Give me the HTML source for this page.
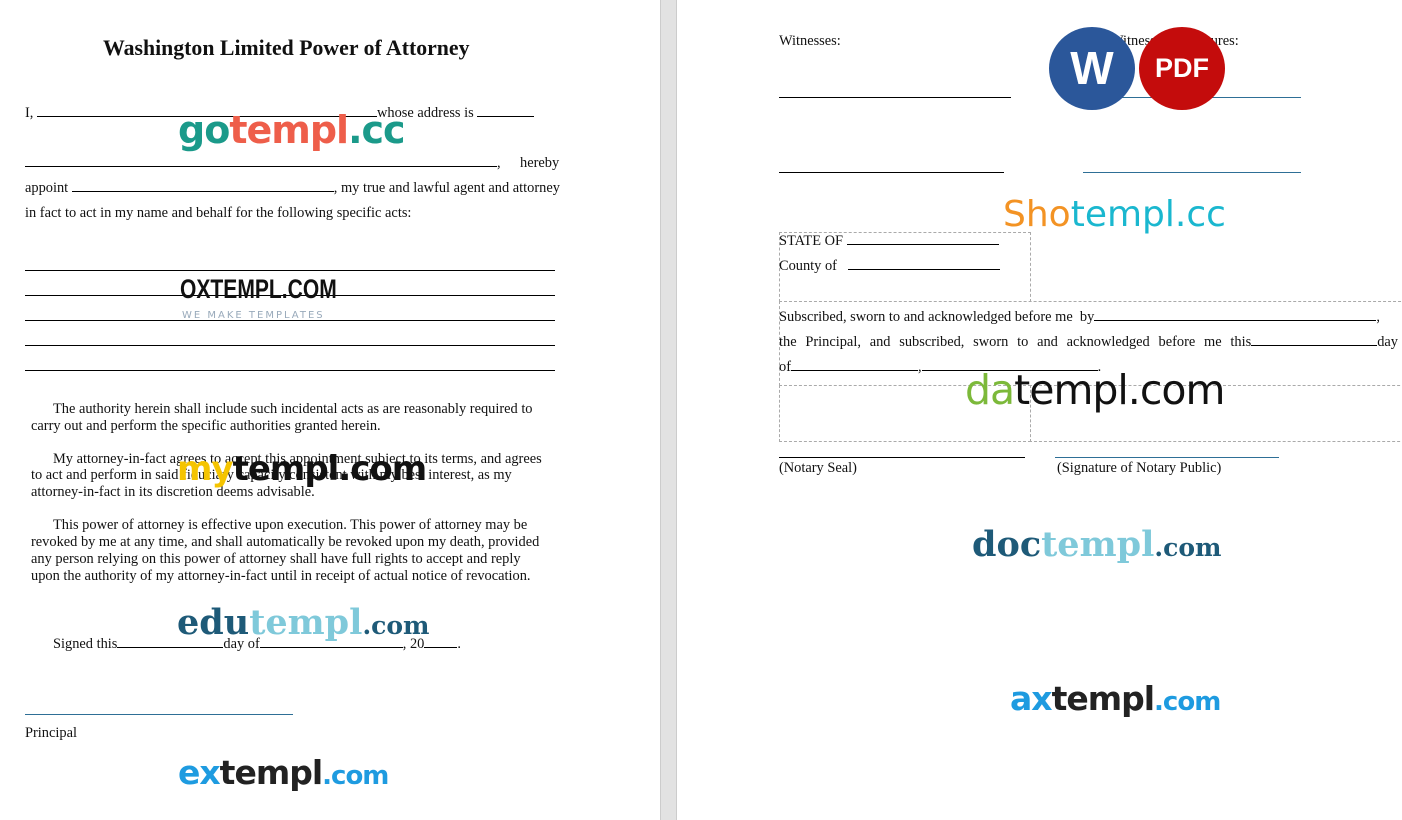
<!DOCTYPE html>
<html><head><meta charset="utf-8"><style>
body{margin:0;width:1402px;height:820px;background:#fff;position:relative;overflow:hidden;font-family:"Liberation Serif",serif;font-size:14.4px;color:#111}
.a{position:absolute;white-space:nowrap;line-height:16px}
.u{display:inline-block;border-bottom:1px solid #000;height:11px;vertical-align:baseline}
.h{position:absolute;height:0;border-top:1px solid #000}
.b{position:absolute;height:0;border-top:1px solid #2e6f96}
.wm{position:absolute;white-space:nowrap;font-family:"DejaVu Sans","Liberation Sans",sans-serif;font-weight:bold;line-height:1}
.d{position:absolute;border:1px dashed #aaa}
</style></head><body>
<div style="position:absolute;left:660px;top:0;width:17px;height:820px;background:#e2e2e2;border-left:1px solid #ccc;border-right:1px solid #ccc;box-sizing:border-box"></div>

<div class="a" style="left:103px;top:37px;font-size:21.8px;font-weight:bold;line-height:22px">Washington Limited Power of Attorney</div>
<div class="a" style="left:25px;top:105px">I, <span class="u" style="width:340px"></span>whose address is <span class="u" style="width:57px"></span></div>
<div class="a" style="left:25px;top:155px"><span class="u" style="width:472px"></span>,</div>
<div class="a" style="left:520px;top:155px">hereby</div>
<div class="a" style="left:25px;top:180px">appoint <span class="u" style="width:262px"></span>, my true and lawful agent and attorney</div>
<div class="a" style="left:25px;top:205px">in fact to act in my name and behalf for the following specific acts:</div>
<div class="h" style="left:25px;top:270px;width:530px"></div>
<div class="h" style="left:25px;top:295px;width:530px"></div>
<div class="h" style="left:25px;top:320px;width:530px"></div>
<div class="h" style="left:25px;top:345px;width:530px"></div>
<div class="h" style="left:25px;top:370px;width:530px"></div>

<div class="a" style="left:53px;top:401px">The authority herein shall include such incidental acts as are reasonably required to</div>
<div class="a" style="left:31px;top:418px">carry out and perform the specific authorities granted herein.</div>
<div class="a" style="left:53px;top:451px">My attorney-in-fact agrees to accept this appointment subject to its terms, and agrees</div>
<div class="a" style="left:31px;top:467px">to act and perform in said fiduciary capacity consistent with my best interest, as my</div>
<div class="a" style="left:31px;top:484px">attorney-in-fact in its discretion deems advisable.</div>
<div class="a" style="left:53px;top:517px">This power of attorney is effective upon execution. This power of attorney may be</div>
<div class="a" style="left:31px;top:534px">revoked by me at any time, and shall automatically be revoked upon my death, provided</div>
<div class="a" style="left:31px;top:551px">any person relying on this power of attorney shall have full rights to accept and reply</div>
<div class="a" style="left:31px;top:568px">upon the authority of my attorney-in-fact until in receipt of actual notice of revocation.</div>
<div class="a" style="left:53px;top:636px">Signed this<span class="u" style="width:106px"></span>day of<span class="u" style="width:143px"></span>, 20<span class="u" style="width:33px"></span>.</div>
<div class="b" style="left:25px;top:714px;width:268px"></div>
<div class="a" style="left:25px;top:725px">Principal</div>

<!-- right page -->
<div class="a" style="left:779px;top:33px">Witnesses:</div>
<div class="a" style="left:1110px;top:33px">Witnesses' Signatures:</div>
<div class="h" style="left:779px;top:97px;width:232px"></div>
<div class="b" style="left:1083px;top:97px;width:218px"></div>
<div class="h" style="left:779px;top:172px;width:225px"></div>
<div class="b" style="left:1083px;top:172px;width:218px"></div>

<div class="d" style="left:779px;top:232px;width:250px;height:69px;border-bottom:none"></div>
<div class="d" style="left:779px;top:301px;width:640px;height:84px;border-bottom:none"></div>
<div class="d" style="left:779px;top:385px;width:250px;height:55px"></div>
<div class="d" style="left:1029px;top:385px;width:390px;height:55px;border-left:none"></div>
<div class="a" style="left:779px;top:233px">STATE OF <span class="u" style="width:152px"></span></div>
<div class="a" style="left:779px;top:258px">County of &nbsp;&nbsp;<span class="u" style="width:152px"></span></div>
<div class="a" style="left:779px;top:309px">Subscribed, sworn to and acknowledged before me &nbsp;by<span class="u" style="width:282px"></span>,</div>
<div class="a" style="left:779px;top:334px;width:619px;white-space:normal;text-align:justify;text-align-last:justify">the Principal, and subscribed, sworn to and acknowledged before me this<span class="u" style="width:126px"></span>day</div>
<div class="a" style="left:779px;top:359px">of<span class="u" style="width:127px"></span>,<span class="u" style="width:176px"></span>.</div>
<div class="h" style="left:779px;top:457px;width:246px"></div>
<div class="b" style="left:1055px;top:457px;width:224px"></div>
<div class="a" style="left:779px;top:460px">(Notary Seal)</div>
<div class="a" style="left:1057px;top:460px">(Signature of Notary Public)</div>

<!-- badges -->
<div style="position:absolute;left:1049px;top:27px;width:86px;height:83px;border-radius:50%;background:#2b579a;color:#fff;font:bold 46px 'Liberation Sans',sans-serif;text-align:center;line-height:83px">W</div>
<div style="position:absolute;left:1139px;top:27px;width:86px;height:83px;border-radius:50%;background:#c40c0c;color:#fff;font:bold 27px 'Liberation Sans',sans-serif;text-align:center;line-height:83px">PDF</div>

<!-- watermarks -->
<div class="wm" style="left:178px;top:111px;font-size:38px;letter-spacing:-1px;font-weight:bold"><span style="color:#1b9a8a">go</span><span style="color:#ee5e4a">templ</span><span style="color:#1b9a8a">.cc</span></div>
<div class="wm" style="left:180px;top:276px;font-size:27px;color:#111;font-family:'Liberation Sans',sans-serif;transform:scaleX(0.78);transform-origin:left top">OXTEMPL.COM</div>
<div class="wm" style="left:182px;top:311px;font-size:10px;color:#9ab;font-weight:normal;letter-spacing:2px">WE MAKE TEMPLATES</div>
<div class="wm" style="left:177px;top:452px;font-size:34px;letter-spacing:-1px"><span style="color:#f5c400">my</span><span style="color:#111">templ.com</span></div>
<div class="wm" style="left:177px;top:605px;font-size:35px;font-family:'DejaVu Serif',serif"><span style="color:#1e5a78">edu</span><span style="color:#7fc9da">templ</span><span style="color:#1e5a78;font-size:25px">.com</span></div>
<div class="wm" style="left:178px;top:756px;font-size:33px;letter-spacing:-1px"><span style="color:#1e9be0">ex</span><span style="color:#222">templ</span><span style="color:#1e9be0;font-size:26px">.com</span></div>
<div class="wm" style="left:1003px;top:197px;font-size:36px;font-weight:normal"><span style="color:#f39324">Sho</span><span style="color:#1ab7cf">templ.cc</span></div>
<div class="wm" style="left:965px;top:370px;font-size:41px;font-weight:normal;letter-spacing:-1px"><span style="color:#7cb93a">da</span><span style="color:#111">templ.com</span></div>
<div class="wm" style="left:972px;top:527px;font-size:35px;font-family:'DejaVu Serif',serif"><span style="color:#1e5a78">doc</span><span style="color:#7fc9da">templ</span><span style="color:#1e5a78;font-size:25px">.com</span></div>
<div class="wm" style="left:1010px;top:682px;font-size:33px;letter-spacing:-1px"><span style="color:#1e9be0">ax</span><span style="color:#222">templ</span><span style="color:#1e9be0;font-size:26px">.com</span></div>
</body></html>
